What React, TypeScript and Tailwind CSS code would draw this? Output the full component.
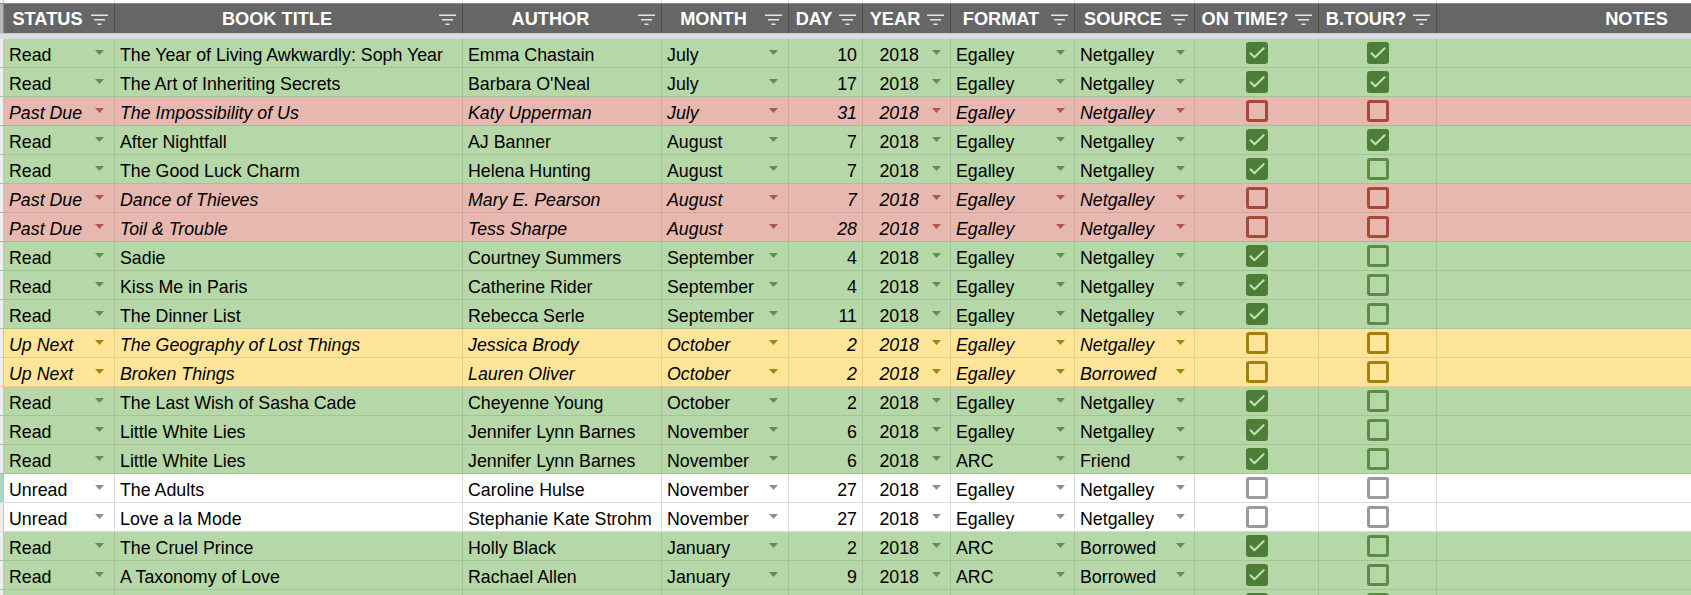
import React from 'react';

type Kind = 'green' | 'red' | 'yellow' | 'white';
type Row = {
  k: Kind;
  s: string;
  t: string;
  a: string;
  m: string;
  d: string;
  y: string;
  f: string;
  src: string;
  on: boolean;
  bt: boolean;
};

const theme: Record<Kind, { bg: string; bd: string; tri: string; fill: string; ub: string; chk: string; it: string }> = {
  green: {
    bg: 'bg-[#b6d7a8]',
    bd: 'border-[#a3c596]',
    tri: '#5e9149',
    fill: 'bg-[#4d7e38]',
    ub: 'border-[#5b8c47]',
    chk: '#c3e0b6',
    it: '',
  },
  red: {
    bg: 'bg-[#e6b8af]',
    bd: 'border-[#d3a59b]',
    tri: '#b0574a',
    fill: 'bg-[#a94a3c]',
    ub: 'border-[#a84839]',
    chk: '#e6b8af',
    it: 'italic',
  },
  yellow: {
    bg: 'bg-[#ffe599]',
    bd: 'border-[#e8cf86]',
    tri: '#a8830f',
    fill: 'bg-[#a47e0e]',
    ub: 'border-[#a47e0e]',
    chk: '#ffe599',
    it: 'italic',
  },
  white: {
    bg: 'bg-white',
    bd: 'border-[#dadada]',
    tri: '#8f8f8f',
    fill: 'bg-[#8f8f8f]',
    ub: 'border-[#9a9a9a]',
    chk: '#ffffff',
    it: '',
  },
};

const rows: Row[] = [
  { k: 'green', s: 'Read', t: 'The Year of Living Awkwardly: Soph Year', a: 'Emma Chastain', m: 'July', d: '10', y: '2018', f: 'Egalley', src: 'Netgalley', on: true, bt: true },
  { k: 'green', s: 'Read', t: 'The Art of Inheriting Secrets', a: "Barbara O'Neal", m: 'July', d: '17', y: '2018', f: 'Egalley', src: 'Netgalley', on: true, bt: true },
  { k: 'red', s: 'Past Due', t: 'The Impossibility of Us', a: 'Katy Upperman', m: 'July', d: '31', y: '2018', f: 'Egalley', src: 'Netgalley', on: false, bt: false },
  { k: 'green', s: 'Read', t: 'After Nightfall', a: 'AJ Banner', m: 'August', d: '7', y: '2018', f: 'Egalley', src: 'Netgalley', on: true, bt: true },
  { k: 'green', s: 'Read', t: 'The Good Luck Charm', a: 'Helena Hunting', m: 'August', d: '7', y: '2018', f: 'Egalley', src: 'Netgalley', on: true, bt: false },
  { k: 'red', s: 'Past Due', t: 'Dance of Thieves', a: 'Mary E. Pearson', m: 'August', d: '7', y: '2018', f: 'Egalley', src: 'Netgalley', on: false, bt: false },
  { k: 'red', s: 'Past Due', t: 'Toil & Trouble', a: 'Tess Sharpe', m: 'August', d: '28', y: '2018', f: 'Egalley', src: 'Netgalley', on: false, bt: false },
  { k: 'green', s: 'Read', t: 'Sadie', a: 'Courtney Summers', m: 'September', d: '4', y: '2018', f: 'Egalley', src: 'Netgalley', on: true, bt: false },
  { k: 'green', s: 'Read', t: 'Kiss Me in Paris', a: 'Catherine Rider', m: 'September', d: '4', y: '2018', f: 'Egalley', src: 'Netgalley', on: true, bt: false },
  { k: 'green', s: 'Read', t: 'The Dinner List', a: 'Rebecca Serle', m: 'September', d: '11', y: '2018', f: 'Egalley', src: 'Netgalley', on: true, bt: false },
  { k: 'yellow', s: 'Up Next', t: 'The Geography of Lost Things', a: 'Jessica Brody', m: 'October', d: '2', y: '2018', f: 'Egalley', src: 'Netgalley', on: false, bt: false },
  { k: 'yellow', s: 'Up Next', t: 'Broken Things', a: 'Lauren Oliver', m: 'October', d: '2', y: '2018', f: 'Egalley', src: 'Borrowed', on: false, bt: false },
  { k: 'green', s: 'Read', t: 'The Last Wish of Sasha Cade', a: 'Cheyenne Young', m: 'October', d: '2', y: '2018', f: 'Egalley', src: 'Netgalley', on: true, bt: false },
  { k: 'green', s: 'Read', t: 'Little White Lies', a: 'Jennifer Lynn Barnes', m: 'November', d: '6', y: '2018', f: 'Egalley', src: 'Netgalley', on: true, bt: false },
  { k: 'green', s: 'Read', t: 'Little White Lies', a: 'Jennifer Lynn Barnes', m: 'November', d: '6', y: '2018', f: 'ARC', src: 'Friend', on: true, bt: false },
  { k: 'white', s: 'Unread', t: 'The Adults', a: 'Caroline Hulse', m: 'November', d: '27', y: '2018', f: 'Egalley', src: 'Netgalley', on: false, bt: false },
  { k: 'white', s: 'Unread', t: 'Love a la Mode', a: 'Stephanie Kate Strohm', m: 'November', d: '27', y: '2018', f: 'Egalley', src: 'Netgalley', on: false, bt: false },
  { k: 'green', s: 'Read', t: 'The Cruel Prince', a: 'Holly Black', m: 'January', d: '2', y: '2018', f: 'ARC', src: 'Borrowed', on: true, bt: false },
  { k: 'green', s: 'Read', t: 'A Taxonomy of Love', a: 'Rachael Allen', m: 'January', d: '9', y: '2018', f: 'ARC', src: 'Borrowed', on: true, bt: false },
  { k: 'green', s: '', t: '', a: '', m: '', d: '', y: '', f: '', src: '', on: true, bt: false },
];

const W = {
  status: 'w-[111px]',
  title: 'w-[348px]',
  author: 'w-[199px]',
  month: 'w-[127px]',
  day: 'w-[74px]',
  year: 'w-[88px]',
  format: 'w-[124px]',
  source: 'w-[120px]',
  on: 'w-[124px]',
  bt: 'w-[118px]',
  notes: 'w-[400px]',
};

const headers: { label: string; w: string; icon: boolean }[] = [
  { label: 'STATUS', w: W.status, icon: true },
  { label: 'BOOK TITLE', w: W.title, icon: true },
  { label: 'AUTHOR', w: W.author, icon: true },
  { label: 'MONTH', w: W.month, icon: true },
  { label: 'DAY', w: W.day, icon: true },
  { label: 'YEAR', w: W.year, icon: true },
  { label: 'FORMAT', w: W.format, icon: true },
  { label: 'SOURCE', w: W.source, icon: true },
  { label: 'ON TIME?', w: W.on, icon: true },
  { label: 'B.TOUR?', w: W.bt, icon: true },
  { label: 'NOTES', w: W.notes, icon: false },
];

function FilterIcon() {
  return (
    <svg width="17" height="11" viewBox="0 0 17 11" className="shrink-0 mr-[6px] mt-[2px]">
      <rect x="0" y="0.5" width="17" height="1.5" fill="#e4e4e4" />
      <rect x="3" y="5" width="11" height="1.5" fill="#e4e4e4" />
      <rect x="6.5" y="9.5" width="4" height="1.5" fill="#e4e4e4" />
    </svg>
  );
}

function Tri({ color }: { color: string }) {
  return (
    <svg width="9" height="5" viewBox="0 0 9 5" className="shrink-0 mb-[2px]">
      <polygon points="0,0 9,0 4.5,5" fill={color} />
    </svg>
  );
}

function Check({ on, kind }: { on: boolean; kind: Kind }) {
  const th = theme[kind];
  if (on) {
    return (
      <div className={`w-[22px] h-[22px] rounded-[3px] ${th.fill} flex items-center justify-center`}>
        <svg width="22" height="22" viewBox="0 0 22 22">
          <path d="M4.5 11.3 L8.4 15.3 L17.6 6.2" fill="none" stroke={th.chk} strokeWidth="2" strokeLinecap="round" strokeLinejoin="round" />
        </svg>
      </div>
    );
  }
  return <div className={`w-[22px] h-[22px] rounded-[3px] border-[3px] ${th.ub}`} />;
}

function Txt({ children, cls = '' }: { children: React.ReactNode; cls?: string }) {
  return <span className={`whitespace-nowrap leading-[24px] pt-[4px] ${cls}`}>{children}</span>;
}

function DataRow({ r, idx }: { r: Row; idx: number }) {
  const th = theme[r.k];
  const cell = `h-full shrink-0 border-r ${th.bd} flex items-center overflow-hidden`;
  return (
    <div className={`flex h-[29px] border-b ${th.bd} ${th.bg} ${th.it} text-black`}>
      <div className={`w-[4px] h-full shrink-0 border-r border-[#c4c4c4] ${idx === 15 ? 'bg-[#a6d6c4]' : 'bg-[#eeeeee]'}`} />
      <div className={`${cell} ${W.status} pl-[5px] pr-[10px] justify-between`}>
        <Txt>{r.s}</Txt>
        <Tri color={th.tri} />
      </div>
      <div className={`${cell} ${W.title} pl-[5px]`}>
        <Txt>{r.t}</Txt>
      </div>
      <div className={`${cell} ${W.author} pl-[5px]`}>
        <Txt>{r.a}</Txt>
      </div>
      <div className={`${cell} ${W.month} pl-[5px] pr-[10px] justify-between`}>
        <Txt>{r.m}</Txt>
        <Tri color={th.tri} />
      </div>
      <div className={`${cell} ${W.day} pr-[5px] justify-end`}>
        <Txt>{r.d}</Txt>
      </div>
      <div className={`${cell} ${W.year} pr-[9px] justify-end gap-[13px]`}>
        <Txt>{r.y}</Txt>
        <Tri color={th.tri} />
      </div>
      <div className={`${cell} ${W.format} pl-[5px] pr-[9px] justify-between`}>
        <Txt>{r.f}</Txt>
        <Tri color={th.tri} />
      </div>
      <div className={`${cell} ${W.source} pl-[5px] pr-[9px] justify-between`}>
        <Txt>{r.src}</Txt>
        <Tri color={th.tri} />
      </div>
      <div className={`${cell} ${W.on} justify-center`}>
        <Check on={r.on} kind={r.k} />
      </div>
      <div className={`${cell} ${W.bt} justify-center`}>
        <Check on={r.bt} kind={r.k} />
      </div>
      <div className={`${cell} ${W.notes}`} />
    </div>
  );
}

export default function App() {
  return (
    <div className="w-[1691px] h-[595px] overflow-hidden bg-white font-['Liberation_Sans',Arial,sans-serif] text-[17.8px]">
      <div className="w-[2000px]">
        {/* top strip */}
        <div className="flex h-[3px] bg-white">
          <div className="w-[4px] shrink-0 border-r border-[#c4c4c4] bg-[#eeeeee]" />
          {headers.map((h) => (
            <div key={h.label} className={`${h.w} shrink-0 h-full border-r border-[#dadada]`} />
          ))}
        </div>
        <div className="h-[1px] bg-[#4caf6a]" />
        {/* header */}
        <div className="flex h-[29px] bg-[#666666]">
          <div className="w-[4px] shrink-0 h-full bg-[#b8b8b8] border-r border-[#8a8a8a]" />
          {headers.map((h) => (
            <div key={h.label} className={`${h.w} shrink-0 h-full border-r border-[#4f4f4f] flex items-center overflow-hidden`}>
              <span className="flex-1 text-center text-white font-bold text-[18.2px] whitespace-nowrap leading-[27px] pt-[2px]">{h.label}</span>
              {h.icon && <FilterIcon />}
            </div>
          ))}
        </div>
        {/* frozen band */}
        <div className="h-[6px] bg-[#d9dce3] border-t border-[#c7cad1]" />
        {rows.map((r, i) => (
          <DataRow key={i} r={r} idx={i} />
        ))}
      </div>
    </div>
  );
}
